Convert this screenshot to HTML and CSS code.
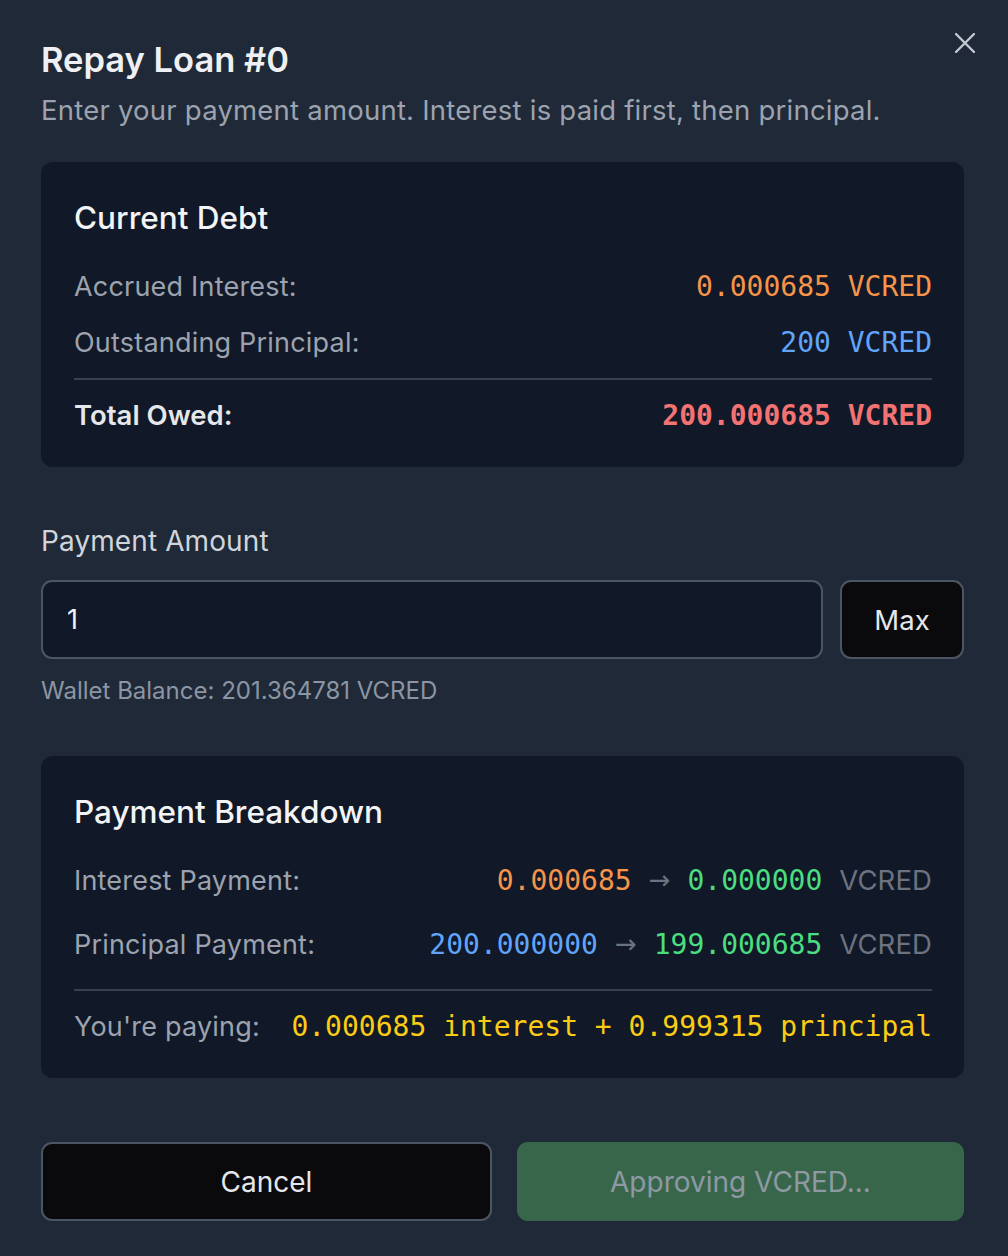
FILE: index.html
```html
<!DOCTYPE html>
<html>
<head>
<meta charset="utf-8">
<link rel="stylesheet" href="styles.css">
</head>
<body>
<div class="modal">
  <button class="close" aria-label="Close">
    <svg width="20" height="20" viewBox="0 0 20 20"><path d="M1 1 L19 19 M19 1 L1 19" stroke="currentColor" stroke-width="2.4" stroke-linecap="round" fill="none"/></svg>
  </button>
  <h1 class="title">Repay Loan #0</h1>
  <p class="subtitle">Enter your payment amount. Interest is paid first, then principal.</p>

  <section class="card">
    <h2 class="card-title">Current Debt</h2>
    <div class="row">
      <span class="label">Accrued Interest:</span>
      <span class="mono orange">0.000685 VCRED</span>
    </div>
    <div class="row">
      <span class="label">Outstanding Principal:</span>
      <span class="mono blue">200 VCRED</span>
    </div>
    <div class="row total">
      <span class="label-strong">Total Owed:</span>
      <span class="mono red bold">200.000685 VCRED</span>
    </div>
  </section>

  <div class="field-label">Payment Amount</div>
  <div class="input-row">
    <div class="input">1</div>
    <button class="max">Max</button>
  </div>
  <div class="wallet">Wallet Balance: 201.364781 VCRED</div>

  <section class="card card2">
    <h2 class="card-title">Payment Breakdown</h2>
    <div class="row brow">
      <span class="label">Interest Payment:</span>
      <span class="vals"><span class="mono orange">0.000685</span><span class="arrow">→</span><span class="mono green">0.000000</span><span class="unit">VCRED</span></span>
    </div>
    <div class="row brow">
      <span class="label">Principal Payment:</span>
      <span class="vals"><span class="mono blue">200.000000</span><span class="arrow">→</span><span class="mono green">199.000685</span><span class="unit">VCRED</span></span>
    </div>
    <div class="row total2">
      <span class="label">You're paying:</span>
      <span class="mono yellow">0.000685 interest + 0.999315 principal</span>
    </div>
  </section>

  <div class="actions">
    <button class="btn cancel">Cancel</button>
    <button class="btn approve">Approving VCRED...</button>
  </div>
</div>
</body>
</html>
```

FILE: styles.css
```css
* { box-sizing: border-box; }
html, body { margin: 0; padding: 0; }
body {
  background: #1f2937;
  font-family: Inter, "Noto Sans", sans-serif;
  width: 1008px;
  height: 1256px;
  overflow: hidden;
}
.modal {
  position: relative;
  padding: 40px 44px 0 41px;
  display: flex;
  flex-direction: column;
}
.close {
  position: absolute;
  top: 33px;
  left: 955px;
  width: 20px;
  height: 20px;
  padding: 0;
  border: 0;
  background: none;
  color: #c3c8d0;
  display: flex;
}
.title {
  margin: 0;
  font-size: 34.5px;
  line-height: 40px;
  font-weight: 600;
  color: #eef0f3;
}
.subtitle {
  margin: 12px 0 0;
  font-size: 27.5px;
  line-height: 36px;
  color: #9ca3af;
  letter-spacing: 0.22px;
}
.card {
  margin-top: 34px;
  background: #111827;
  border-radius: 12px;
  padding: 33px 32px 32px 33px;
}
.card-title {
  margin: 0;
  font-size: 31.5px;
  line-height: 46px;
  font-weight: 500;
  color: #f3f4f6;
}
.row {
  display: flex;
  justify-content: space-between;
  align-items: center;
  height: 40px;
  margin-top: 16px;
}
.card .card-title + .row { margin-top: 25px; }
.label {
  font-size: 27px;
  color: #9ca3af;
  letter-spacing: 0.2px;
}
.label-strong {
  font-size: 27.5px;
  font-weight: 600;
  color: #e5e7eb;
}
.mono {
  font-family: "DejaVu Sans Mono", "Liberation Mono", monospace;
  font-size: 28px;
}
.bold { font-weight: 700; }
.orange { color: #f6944a; }
.blue { color: #60a5fa; }
.red { color: #f37272; }
.green { color: #4ade80; }
.yellow { color: #facc15; }
.total {
  margin-top: 16px;
  border-top: 2px solid #374151;
  padding-top: 15px;
  height: 57px;
}
.field-label {
  margin-top: 56px;
  font-size: 28px;
  line-height: 36px;
  color: #d1d5db;
  letter-spacing: 0.1px;
}
.input-row {
  margin-top: 21px;
  display: flex;
  gap: 17px;
  height: 79px;
}
.input {
  flex: 1;
  background: #111827;
  border: 2px solid #4b5563;
  border-radius: 11px;
  color: #f3f4f6;
  font-size: 27px;
  display: flex;
  align-items: center;
  padding-left: 24px;
}
.max {
  width: 124px;
  background: #0a0a0c;
  border: 2px solid #4b5563;
  border-radius: 11px;
  color: #e5e7eb;
  font-family: Inter, "Noto Sans", sans-serif;
  font-size: 27.5px;
  font-weight: 400;
}
.wallet {
  margin-top: 17px;
  font-size: 24px;
  line-height: 30px;
  color: #8b95a4;
}
.card2 { margin-top: 50px; }
.brow { height: 48px; }
.card2 .card-title + .row { margin-top: 21px; }
.brow + .brow { margin-top: 16px; }
.vals { display: flex; align-items: center; }
.arrow {
  color: #6b7280;
  font-size: 26px;
  margin: 0 17px;
  font-family: "DejaVu Sans", sans-serif;
}
.unit {
  font-size: 27.5px;
  color: #6b7280;
  margin-left: 17px;
  letter-spacing: 0.1px;
}
.total2 {
  margin-top: 21px;
  border-top: 2px solid #374151;
  padding-top: 16px;
  height: 57px;
}
.actions {
  margin-top: 64px;
  display: flex;
  gap: 25px;
  height: 79px;
}
.btn {
  border-radius: 11px;
  font-family: Inter, "Noto Sans", sans-serif;
  font-size: 28px;
  font-weight: 400;
}
.cancel {
  width: 451px;
  background: #0a0a0c;
  border: 2px solid #4b5563;
  color: #e5e7eb;
}
.approve {
  flex: 1;
  background: #38664a;
  border: 0;
  color: #8e99a4;
}
```
